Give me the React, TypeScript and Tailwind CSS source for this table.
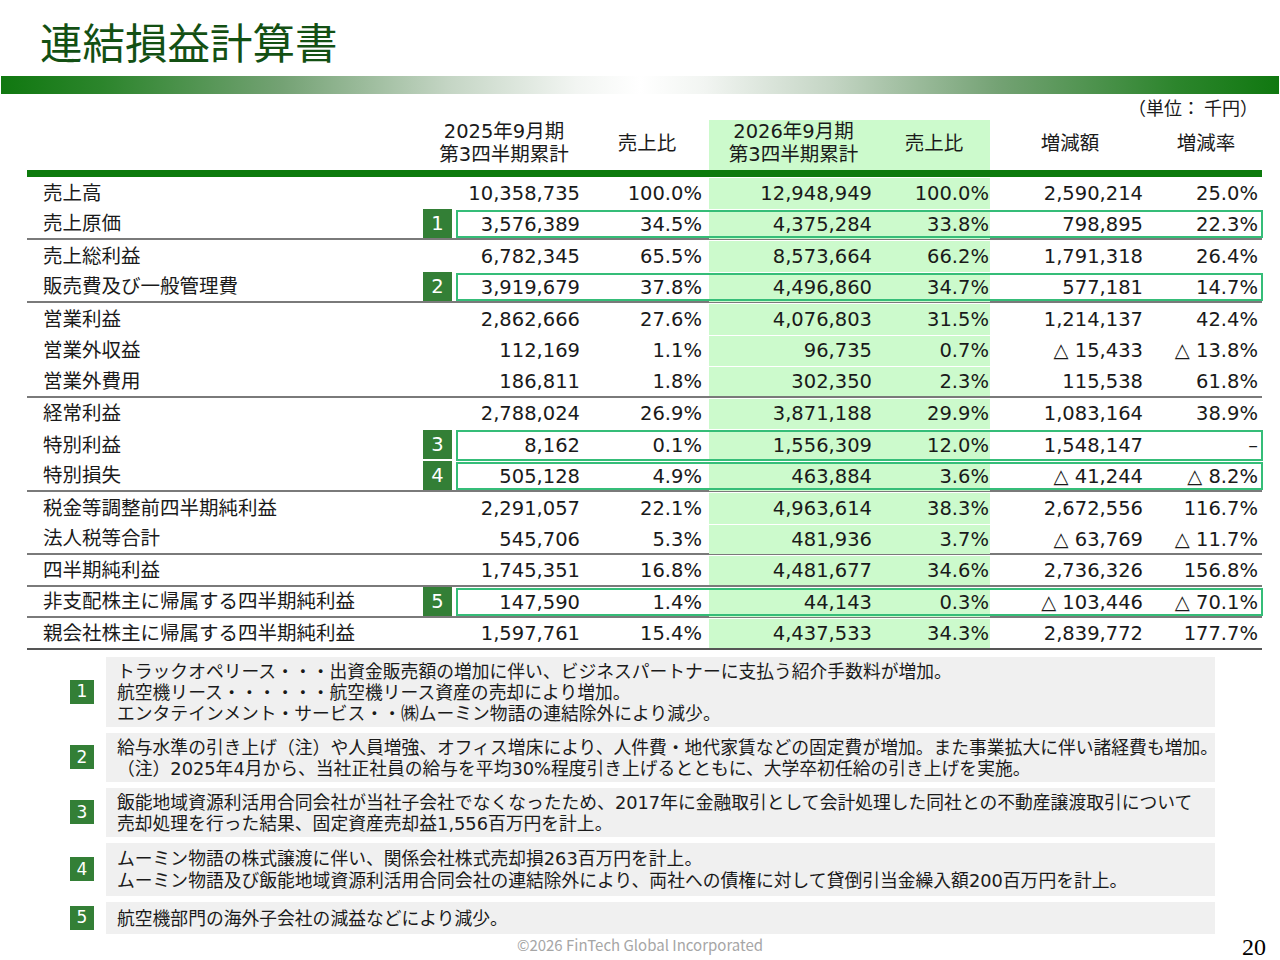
import React from 'react';

type Row = {
  label: string;
  a: string;
  b: string;
  c: string;
  d: string;
  e: string;
  f: string;
  badge?: string;
  box?: boolean;
  line?: 'gray' | 'dark';
};

const rows: Row[] = [
  { label: '売上高', a: '10,358,735', b: '100.0%', c: '12,948,949', d: '100.0%', e: '2,590,214', f: '25.0%' },
  { label: '売上原価', a: '3,576,389', b: '34.5%', c: '4,375,284', d: '33.8%', e: '798,895', f: '22.3%', badge: '1', box: true, line: 'gray' },
  { label: '売上総利益', a: '6,782,345', b: '65.5%', c: '8,573,664', d: '66.2%', e: '1,791,318', f: '26.4%' },
  { label: '販売費及び一般管理費', a: '3,919,679', b: '37.8%', c: '4,496,860', d: '34.7%', e: '577,181', f: '14.7%', badge: '2', box: true, line: 'gray' },
  { label: '営業利益', a: '2,862,666', b: '27.6%', c: '4,076,803', d: '31.5%', e: '1,214,137', f: '42.4%' },
  { label: '営業外収益', a: '112,169', b: '1.1%', c: '96,735', d: '0.7%', e: '△ 15,433', f: '△ 13.8%' },
  { label: '営業外費用', a: '186,811', b: '1.8%', c: '302,350', d: '2.3%', e: '115,538', f: '61.8%', line: 'gray' },
  { label: '経常利益', a: '2,788,024', b: '26.9%', c: '3,871,188', d: '29.9%', e: '1,083,164', f: '38.9%' },
  { label: '特別利益', a: '8,162', b: '0.1%', c: '1,556,309', d: '12.0%', e: '1,548,147', f: '–', badge: '3', box: true },
  { label: '特別損失', a: '505,128', b: '4.9%', c: '463,884', d: '3.6%', e: '△ 41,244', f: '△ 8.2%', badge: '4', box: true, line: 'gray' },
  { label: '税金等調整前四半期純利益', a: '2,291,057', b: '22.1%', c: '4,963,614', d: '38.3%', e: '2,672,556', f: '116.7%' },
  { label: '法人税等合計', a: '545,706', b: '5.3%', c: '481,936', d: '3.7%', e: '△ 63,769', f: '△ 11.7%', line: 'gray' },
  { label: '四半期純利益', a: '1,745,351', b: '16.8%', c: '4,481,677', d: '34.6%', e: '2,736,326', f: '156.8%', line: 'gray' },
  { label: '非支配株主に帰属する四半期純利益', a: '147,590', b: '1.4%', c: '44,143', d: '0.3%', e: '△ 103,446', f: '△ 70.1%', badge: '5', box: true, line: 'gray' },
  { label: '親会社株主に帰属する四半期純利益', a: '1,597,761', b: '15.4%', c: '4,437,533', d: '34.3%', e: '2,839,772', f: '177.7%', line: 'dark' },
];

type Note = { n: string; lines: string[]; h: string; lead: string };

const notes: Note[] = [
  {
    n: '1',
    h: 'h-[70px]',
    lead: 'leading-[21px]',
    lines: [
      'トラックオペリース・・・出資金販売額の増加に伴い、ビジネスパートナーに支払う紹介手数料が増加。',
      '航空機リース・・・・・・航空機リース資産の売却により増加。',
      'エンタテインメント・サービス・・㈱ムーミン物語の連結除外により減少。',
    ],
  },
  {
    n: '2',
    h: 'h-[49px]',
    lead: 'leading-[21px]',
    lines: [
      '給与水準の引き上げ（注）や人員増強、オフィス増床により、人件費・地代家賃などの固定費が増加。また事業拡大に伴い諸経費も増加。',
      '（注）2025年4月から、当社正社員の給与を平均30%程度引き上げるとともに、大学卒初任給の引き上げを実施。',
    ],
  },
  {
    n: '3',
    h: 'h-[49px]',
    lead: 'leading-[21px]',
    lines: [
      '飯能地域資源利活用合同会社が当社子会社でなくなったため、2017年に金融取引として会計処理した同社との不動産譲渡取引について',
      '売却処理を行った結果、固定資産売却益1,556百万円を計上。',
    ],
  },
  {
    n: '4',
    h: 'h-[53px]',
    lead: 'leading-[22px]',
    lines: [
      'ムーミン物語の株式譲渡に伴い、関係会社株式売却損263百万円を計上。',
      'ムーミン物語及び飯能地域資源利活用合同会社の連結除外により、両社への債権に対して貸倒引当金繰入額200百万円を計上。',
    ],
  },
  {
    n: '5',
    h: 'h-[32px]',
    lead: 'leading-[21px]',
    lines: ['航空機部門の海外子会社の減益などにより減少。'],
  },
];

function DataRow({ r }: { r: Row }) {
  const lineCls =
    r.line === 'gray'
      ? 'border-b-2 border-[#7a7a7a]'
      : r.line === 'dark'
      ? 'border-b-2 border-[#555555]'
      : '';
  return (
    <div className={`flex h-[31.5px] box-border ${lineCls}`}>
      <div className="w-[396px] flex items-center pl-[16px] pt-[1px] whitespace-nowrap">{r.label}</div>
      <div className="w-[32px] flex items-center">
        {r.badge ? (
          <div className="w-[29px] h-[29px] bg-[#337f36] text-white flex items-center justify-center leading-none">
            {r.badge}
          </div>
        ) : null}
      </div>
      <div className="relative grid grid-cols-[130px_124px_169px_112px_160px_112px] pt-[1px]">
        <div className="flex items-center justify-end pr-[5px] whitespace-nowrap">{r.a}</div>
        <div className="flex items-center justify-end pr-[7px] whitespace-nowrap">{r.b}</div>
        <div className="flex items-center justify-end pr-[6px] whitespace-nowrap bg-[#ccfacc]">{r.c}</div>
        <div className="flex items-center justify-end pr-[1px] whitespace-nowrap bg-[#ccfacc]">{r.d}</div>
        <div className="flex items-center justify-end pr-[7px] whitespace-nowrap">{r.e}</div>
        <div className="flex items-center justify-end pr-[4px] whitespace-nowrap">{r.f}</div>
        {r.box ? (
          <div className="pointer-events-none absolute top-[1px] bottom-0 left-[1px] right-[-1px] border-2 border-[#35bd78]" />
        ) : null}
      </div>
    </div>
  );
}

export default function App() {
  return (
    <div className="w-[1280px] h-[960px] overflow-hidden bg-white text-[#1a1a1a] font-['DejaVu_Sans','Noto_Sans_CJK_JP',sans-serif]">
      {/* Title */}
      <div className="h-[76px] pl-[40px] pt-[19px]">
        <h1 className="text-[42.5px] leading-[44px] text-[#135013] font-['Noto_Sans_CJK_JP',sans-serif]">
          連結損益計算書
        </h1>
      </div>
      {/* Gradient bar */}
      <div className="mx-[1px] h-[18px] bg-[linear-gradient(90deg,#107810_0%,#2c852c_8%,#74a274_22%,#c4d5c4_35%,#f2f5f2_45%,#ffffff_50%,#f2f5f2_55%,#c4d5c4_65%,#74a274_78%,#2c852c_92%,#107810_100%)]" />
      {/* Unit */}
      <div className="h-[26px] flex items-center justify-end pr-[22px] text-[18px] leading-[26px] font-['Noto_Sans_CJK_JP',sans-serif]">
        （単位： 千円）
      </div>

      {/* Table */}
      <div className="ml-[27px] w-[1235px] text-[19.5px]">
        {/* Header */}
        <div className="flex h-[50px] leading-[23px]">
          <div className="w-[396px]" />
          <div className="w-[162px] flex flex-col items-center justify-center pb-[4px]">
            <span>2025年9月期</span>
            <span>第3四半期累計</span>
          </div>
          <div className="w-[124px] flex items-center justify-center pb-[4px]">売上比</div>
          <div className="w-[169px] flex flex-col items-center justify-center pb-[4px] bg-[#ccfacc]">
            <span>2026年9月期</span>
            <span>第3四半期累計</span>
          </div>
          <div className="w-[112px] flex items-center justify-center pb-[4px] bg-[#ccfacc]">売上比</div>
          <div className="w-[160px] flex items-center justify-center pb-[4px]">増減額</div>
          <div className="w-[112px] flex items-center justify-center pb-[4px]">増減率</div>
        </div>
        <div className="h-[7px] bg-[#0c7a0c]" />
        {rows.map((r) => (
          <DataRow key={r.label} r={r} />
        ))}
      </div>

      {/* Notes */}
      <div className="mt-[7px] pl-[70px] flex flex-col gap-[6px] text-[17.8px]">
        {notes.map((n) => (
          <div key={n.n} className="flex items-center gap-[12px]">
            <div className="w-[24px] h-[24px] bg-[#337f36] text-white flex items-center justify-center leading-none text-[17px]">
              {n.n}
            </div>
            <div
              className={`w-[1109px] ${n.h} bg-[#f0f0f0] pl-[11px] pt-[1px] flex flex-col justify-center ${n.lead} whitespace-nowrap`}
            >
              {n.lines.map((l, i) => (
                <span key={i}>{l}</span>
              ))}
            </div>
          </div>
        ))}
      </div>

      {/* Footer */}
      <div className="grid grid-cols-[1fr_auto_1fr] h-[26px]">
        <div />
        <div className="pt-[2px] text-[15px] leading-[18px] text-[#a6a6a6] font-['Noto_Sans_CJK_JP',sans-serif]">
          ©2026 FinTech Global Incorporated
        </div>
        <div className="flex justify-end pr-[14px] pt-[1px] text-[24px] leading-[24px] text-black font-['Liberation_Serif',serif]">
          20
        </div>
      </div>
    </div>
  );
}
